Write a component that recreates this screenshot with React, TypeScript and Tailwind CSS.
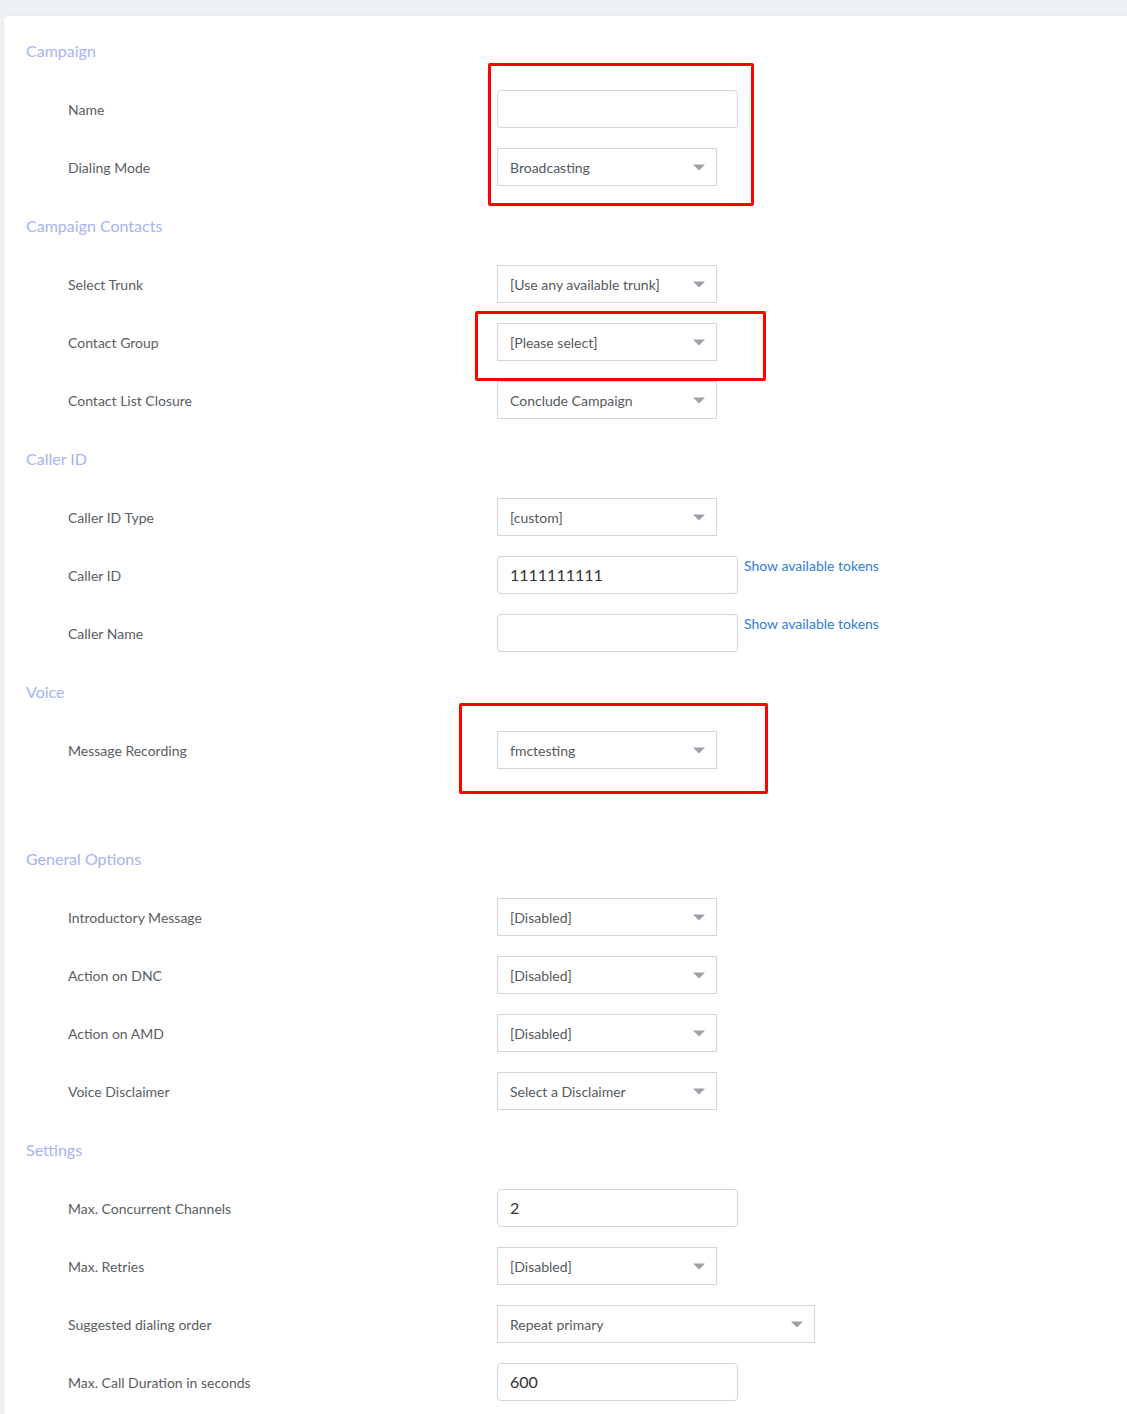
import React from "react";

type Field =
  | { kind: "text"; label: string; value?: string; tokens?: boolean }
  | { kind: "select"; label: string; value: string; wide?: boolean };

interface Section {
  title: string;
  fields: Field[];
  extraGap?: boolean;
}

const sections: Section[] = [
  {
    title: "Campaign",
    fields: [
      { kind: "text", label: "Name" },
      { kind: "select", label: "Dialing Mode", value: "Broadcasting" },
    ],
  },
  {
    title: "Campaign Contacts",
    fields: [
      { kind: "select", label: "Select Trunk", value: "[Use any available trunk]" },
      { kind: "select", label: "Contact Group", value: "[Please select]" },
      { kind: "select", label: "Contact List Closure", value: "Conclude Campaign" },
    ],
  },
  {
    title: "Caller ID",
    fields: [
      { kind: "select", label: "Caller ID Type", value: "[custom]" },
      { kind: "text", label: "Caller ID", value: "1111111111", tokens: true },
      { kind: "text", label: "Caller Name", tokens: true },
    ],
  },
  {
    title: "Voice",
    fields: [{ kind: "select", label: "Message Recording", value: "fmctesting" }],
    extraGap: true,
  },
  {
    title: "General Options",
    fields: [
      { kind: "select", label: "Introductory Message", value: "[Disabled]" },
      { kind: "select", label: "Action on DNC", value: "[Disabled]" },
      { kind: "select", label: "Action on AMD", value: "[Disabled]" },
      { kind: "select", label: "Voice Disclaimer", value: "Select a Disclaimer" },
    ],
  },
  {
    title: "Settings",
    fields: [
      { kind: "text", label: "Max. Concurrent Channels", value: "2" },
      { kind: "select", label: "Max. Retries", value: "[Disabled]" },
      { kind: "select", label: "Suggested dialing order", value: "Repeat primary", wide: true },
      { kind: "text", label: "Max. Call Duration in seconds", value: "600" },
    ],
  },
];

function Caret() {
  return (
    <svg width="12" height="7" viewBox="0 0 12 7" className="shrink-0">
      <path d="M0 0.5 L12 0.5 L6 6.5 Z" fill="#9ba1a9" />
    </svg>
  );
}

function Control({ field }: { field: Field }) {
  if (field.kind === "select") {
    return (
      <div
        className={`flex h-[38px] items-center justify-between border border-[#d3d6dc] bg-white pl-[12px] pr-[11px] text-[14px] text-[#555a60] ${
          field.wide ? "w-[318px]" : "w-[220px]"
        }`}
      >
        <span>{field.value}</span>
        <Caret />
      </div>
    );
  }
  return (
    <div className="flex items-start">
      <div className="flex h-[38px] w-[241px] items-center rounded-[4px] border border-[#d3d6dc] bg-white px-[12px] text-[16px] text-[#333]">
        {field.value}
      </div>
      {field.tokens && (
        <a className="ml-[6px] mt-[-1px] text-[14px] text-[#2f7de1]">Show available tokens</a>
      )}
    </div>
  );
}

export default function App() {
  return (
    <div
      className="min-h-[1414px] bg-[#edf1f4] pl-[4px] pt-[16px]"
      style={{ fontFamily: "Lato, 'Noto Sans', sans-serif" }}
    >
      <div className="relative rounded-tl-[5px] bg-white pb-[20px] pl-[22px] pt-[6px] shadow-[0_0_3px_rgba(0,0,0,0.06)]">
        {sections.map((section) => (
          <div key={section.title} className={section.extraGap ? "mb-[51px]" : "mb-[1px]"}>
            <div className="flex h-[58px] items-center text-[16px] text-[#a7b3f4]">
              {section.title}
            </div>
            {section.fields.map((field) => (
              <div key={field.label} className="flex h-[58px] items-center">
                <div className="w-[471px] pl-[42px] text-[14px] text-[#5a5e63]">{field.label}</div>
                <Control field={field} />
              </div>
            ))}
          </div>
        ))}

        <div className="absolute left-[484px] top-[47px] h-[143px] w-[266px] rounded-[2px] border-[3px] border-[#ff0000]" />
        <div className="absolute left-[471px] top-[295px] h-[70px] w-[291px] rounded-[2px] border-[3px] border-[#ff0000]" />
        <div className="absolute left-[455px] top-[687px] h-[91px] w-[309px] rounded-[2px] border-[3px] border-[#ff0000]" />
      </div>
    </div>
  );
}
